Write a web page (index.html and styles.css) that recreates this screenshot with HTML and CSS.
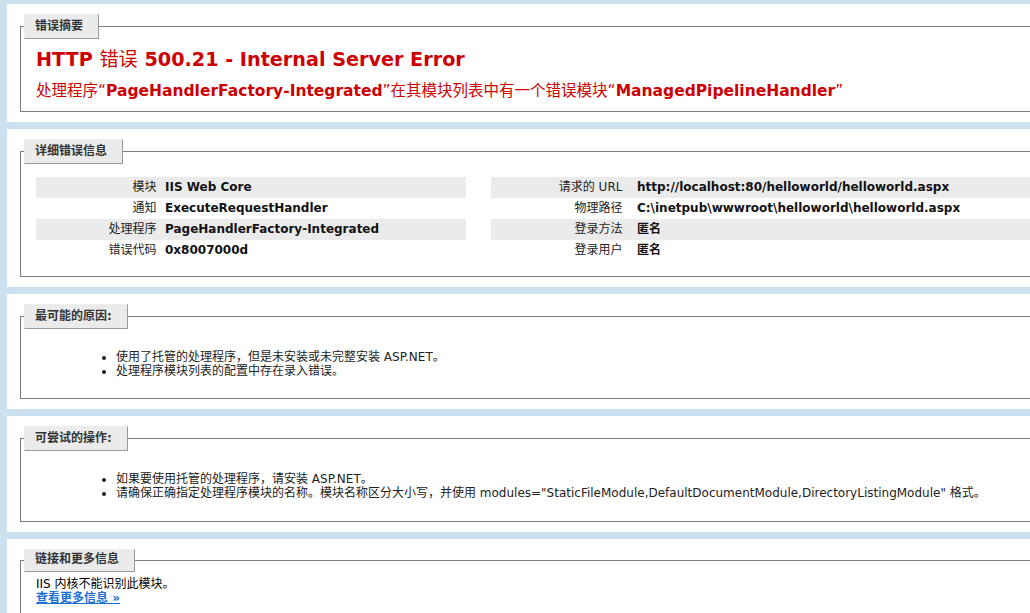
FILE: index.html
```html
<!DOCTYPE html>
<html lang="zh-CN">
<head>
<meta charset="utf-8">
<title>IIS 7.0 详细错误 - 500.21 - Internal Server Error</title>
<link rel="stylesheet" href="styles.css">
</head>
<body>
<div class="content">
  <div class="panel">
    <fieldset class="summary">
      <legend>错误摘要</legend>
      <h2>HTTP <span class="cjk">错误</span> 500.21 - Internal Server Error</h2>
      <h3><span class="cjk">处理程序“</span>PageHandlerFactory-Integrated<span class="cjk">”在其模块列表中有一个错误模块“</span>ManagedPipelineHandler<span class="cjk">”</span></h3>
    </fieldset>
  </div>

  <div class="panel panel-details">
    <fieldset class="details">
      <legend>详细错误信息</legend>
      <div class="details-row">
        <div class="details-left">
          <table>
            <tr class="alt"><th>模块</th><td>IIS Web Core</td></tr>
            <tr><th>通知</th><td>ExecuteRequestHandler</td></tr>
            <tr class="alt"><th>处理程序</th><td>PageHandlerFactory-Integrated</td></tr>
            <tr><th>错误代码</th><td>0x8007000d</td></tr>
          </table>
        </div>
        <div class="details-right">
          <table>
            <tr class="alt"><th>请求的 URL</th><td>http://localhost:80/helloworld/helloworld.aspx</td></tr>
            <tr><th>物理路径</th><td>C:\inetpub\wwwroot\helloworld\helloworld.aspx</td></tr>
            <tr class="alt"><th>登录方法</th><td>匿名</td></tr>
            <tr><th>登录用户</th><td>匿名</td></tr>
          </table>
        </div>
      </div>
    </fieldset>
  </div>

  <div class="panel">
    <fieldset class="list">
      <legend>最可能的原因:</legend>
      <ul>
        <li>使用了托管的处理程序，但是未安装或未完整安装 ASP.NET。</li>
        <li>处理程序模块列表的配置中存在录入错误。</li>
      </ul>
    </fieldset>
  </div>

  <div class="panel">
    <fieldset class="list list-actions">
      <legend>可尝试的操作:</legend>
      <ul>
        <li>如果要使用托管的处理程序，请安装 ASP.NET。</li>
        <li>请确保正确指定处理程序模块的名称。模块名称区分大小写，并使用 modules="StaticFileModule,DefaultDocumentModule,DirectoryListingModule" 格式。</li>
      </ul>
    </fieldset>
  </div>

  <div class="panel">
    <fieldset class="links">
      <legend class="no-expand">链接和更多信息</legend>
      <p>IIS 内核不能识别此模块。</p>
      <p><a href="#">查看更多信息 »</a></p>
    </fieldset>
  </div>
</div>
</body>
</html>
```

FILE: styles.css
```css
html {
  overflow: hidden;
}

body {
  margin: 0;
  padding: 0;
  background: #cbe1ef;
  font-family: Verdana, "DejaVu Sans", "Noto Sans CJK SC", sans-serif;
  font-size: 12px;
  color: #000;
}

.content {
  width: 1400px;
  padding: 4px 0 0 7px;
}

.panel {
  background: #fff;
  width: 1300px;
  padding: 10px;
  margin-bottom: 7px;
}

fieldset {
  margin: 0 3px;
  border: 1px solid #7c7c7c;
  padding: 9px 15px 10px 15px;
  min-width: 0;
}

legend {
  color: #333;
  font-weight: bold;
  font-size: 12px;
  line-height: 15px;
  height: 15px;
  padding: 4px 15px 4px 10px;
  margin: 0 0 0 -12px;
  background: #ebebeb;
  border-top: 1px solid #ededed;
  border-left: 1px solid #ededed;
  border-right: 1px solid #9a9a9a;
  border-bottom: 1px solid #9a9a9a;
}

legend.no-expand {
  padding-top: 2px;
}

h2 {
  margin: 0;
  font-size: 19.2px;
  line-height: 23px;
  color: #cc0000;
  font-weight: bold;
}

h3 {
  margin: 10px 0 0 0;
  font-size: 15.5px;
  line-height: 20px;
  color: #cc0000;
  font-weight: bold;
}

.cjk {
  font-weight: normal;
}

.summary {
  padding-bottom: 10px;
}

.details-row {
  display: flex;
}

.details-left {
  width: 430px;
  flex: none;
  margin-right: 25px;
}

.details-right {
  width: 730px;
  flex: none;
}

table {
  margin: 4px 0;
  width: 100%;
  border-collapse: collapse;
  table-layout: fixed;
}

.panel-details table {
  margin-bottom: 5px;
}

th, td {
  vertical-align: top;
  padding: 3px 0;
  line-height: 15px;
  text-align: left;
  border: none;
  white-space: nowrap;
}

th {
  width: 30%;
  text-align: right;
  padding-right: 2%;
  font-weight: normal;
  color: #222;
}

td {
  font-weight: bold;
  color: #111;
}

.details-right th {
  width: 20%;
}

tr.alt th,
tr.alt td {
  background: #ebebeb;
}

ul {
  margin: 12px 0 10px 40px;
  padding-left: 40px;
  color: #222;
  line-height: 14px;
}

.list-actions ul {
  margin-bottom: 11px;
}

.links {
  padding-top: 5px;
  padding-bottom: 10px;
}

.links p {
  margin: 0;
  line-height: 14px;
}

a:link,
a:visited {
  color: #1a6fd3;
  font-weight: bold;
}
```
